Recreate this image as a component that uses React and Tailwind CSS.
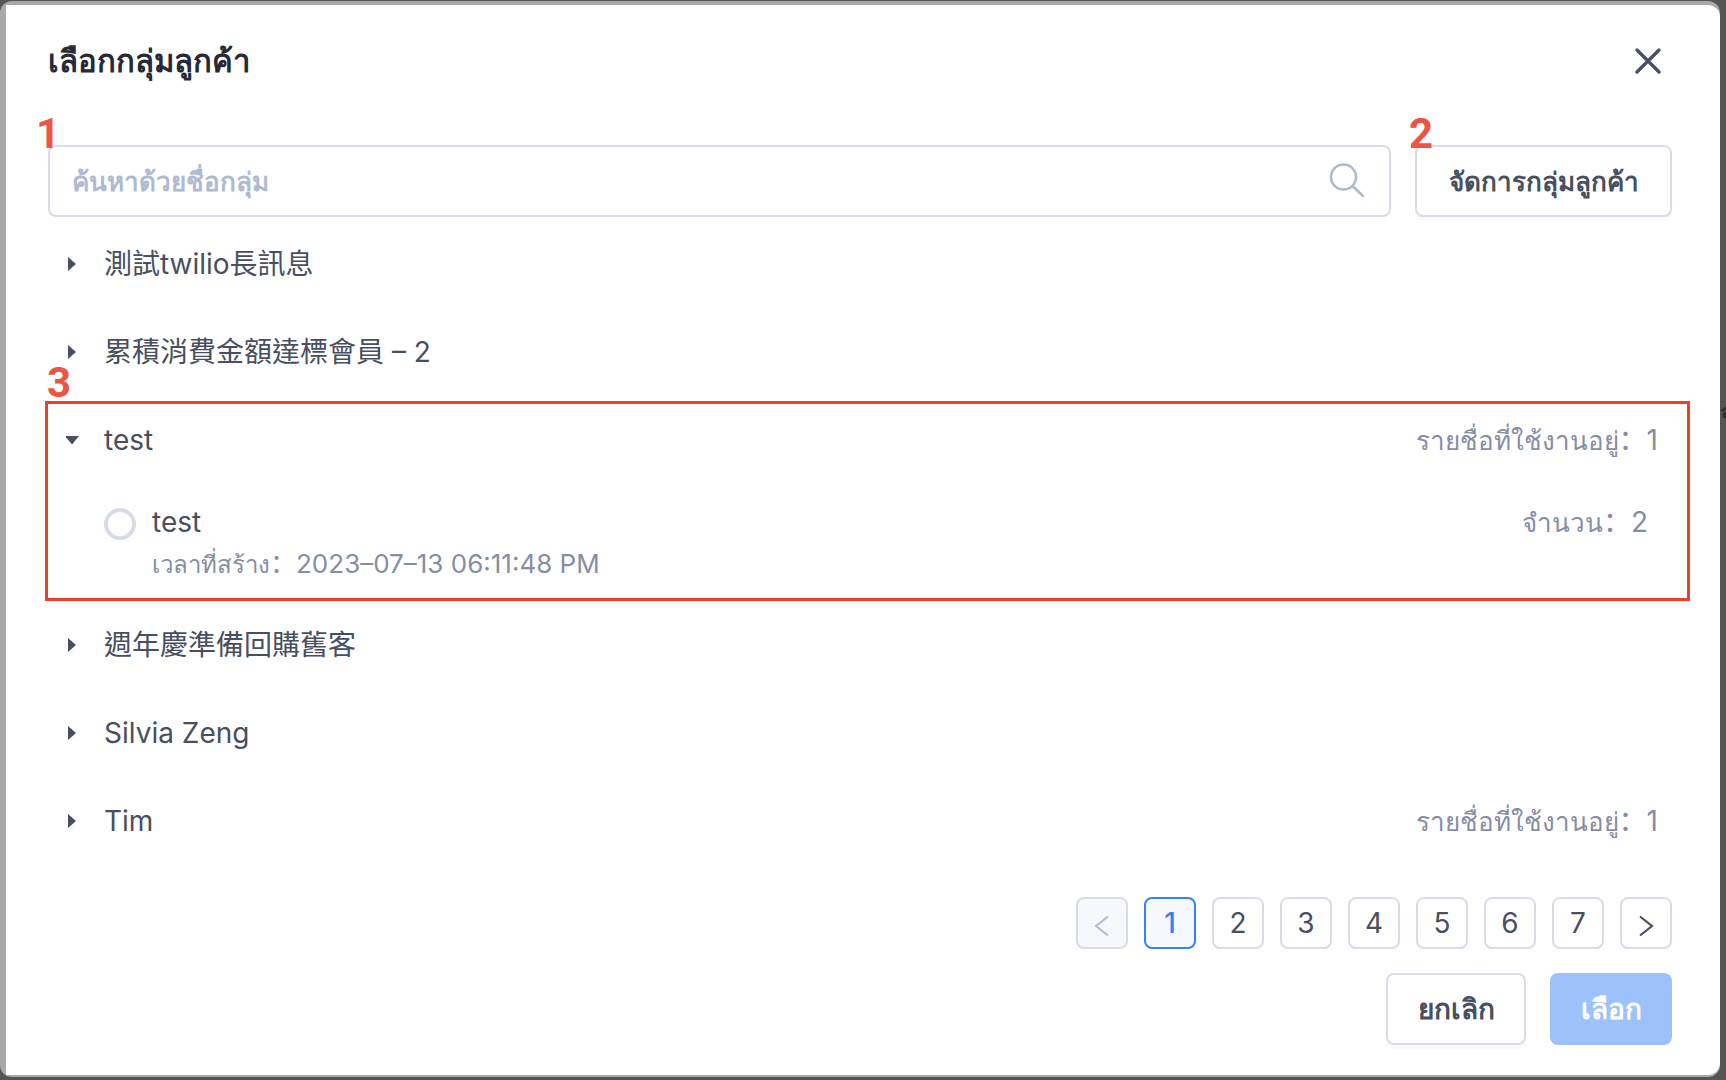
import { useState } from 'react';

const groups = [
  { id: 1, name: '測試twilio長訊息' },
  { id: 2, name: '累積消費金額達標會員 – 2' },
  {
    id: 3,
    name: 'test',
    active: 1,
    marker: '3',
    lists: [{ id: 31, name: 'test', count: 2, createdAt: '2023–07–13 06:11:48 PM' }],
  },
  { id: 4, name: '週年慶準備回購舊客' },
  { id: 5, name: 'Silvia Zeng' },
  { id: 6, name: 'Tim', active: 1 },
];

const pages = [1, 2, 3, 4, 5, 6, 7];

function Marker({ children, className }) {
  return (
    <span
      className={`absolute font-[Roboto,sans-serif] text-[42px] leading-none font-bold text-[#ec5545] pointer-events-none ${className}`}
    >
      {children}
    </span>
  );
}

// The wide colon comes from the Simplified Chinese face
function Label({ text, value, small }) {
  return (
    <span className="text-[#868da5] whitespace-nowrap">
      <span className={small ? 'text-[24px] font-medium' : 'text-[26px] font-medium'}>{text}</span>
      <span lang="zh-CN" className="font-['Noto_Sans_CJK_SC',sans-serif] leading-none">：</span>
      {value}
    </span>
  );
}

function Group({ group, open, onToggle, selected, onSelect }) {
  return (
    <li className="relative">
      <button
        onClick={onToggle}
        aria-expanded={open}
        className="w-full h-22 pl-[18px] pr-3.5 flex items-center text-left"
      >
        <svg viewBox="0 0 14 14" className="w-3.5 h-3.5 mr-6 shrink-0 fill-[#484f60]">
          {open ? <path d="M-1 3h14L6 11.500z" /> : <path d="M2 0v14l8-7z" />}
        </svg>
        <span className="flex-1">{group.name}</span>
        {group.active && <Label text="รายชื่อที่ใช้งานอยู่" value={group.active} />}
      </button>

      {open && group.lists && (
        <div className="h-[117px]">
          {group.lists.map((list) => (
            <div key={list.id} className="pl-14 pr-6 pt-4 flex items-start">
              <input
                type="radio"
                id={`list-${list.id}`}
                name="list"
                checked={selected === list.id}
                onChange={() => onSelect(list.id)}
                className="appearance-none w-8 h-8 mt-2 mr-4 shrink-0 rounded-full border-4 border-[#d8dbe8] checked:border-[#2f80f5]"
              />
              <label htmlFor={`list-${list.id}`} className="flex-1">
                <span className="block h-11 leading-11">{list.name}</span>
                <span className="block h-10 leading-10 text-[26px]">
                  <Label text="เวลาที่สร้าง" value={list.createdAt} small />
                </span>
              </label>
              <span className="leading-11">
                <Label text="จำนวน" value={list.count} />
              </span>
            </div>
          ))}
        </div>
      )}

      {group.marker && (
        <>
          <div className="absolute top-[5px] bottom-0 -left-[3px] -right-[18px] border-3 border-[#ea412c] pointer-events-none" />
          <Marker className="-top-[34px] -left-px">{group.marker}</Marker>
        </>
      )}
    </li>
  );
}

function App() {
  const [query, setQuery] = useState('');
  const [openId, setOpenId] = useState(3);
  const [selected, setSelected] = useState(null);
  const [page, setPage] = useState(1);

  const visible = groups.filter((g) => g.name.includes(query));

  return (
    <div className="relative min-h-screen bg-[#555555] pt-px pr-1.5 pb-[3px] flex font-[Inter,'Noto_Sans_CJK_TC',sans-serif] text-[28px] text-[#484f60]">
      {/* Page text cut off behind the dialog */}
      <span aria-hidden="true" className="absolute right-0 top-[392px] w-1.5 overflow-hidden text-[#2b2e36] font-semibold">จ</span>

      <div className="flex-1 flex rounded-xl bg-[#a9a9a9] pt-1 pl-1.5 pb-0.5">
        <div role="dialog" aria-labelledby="title" className="flex-1 flex flex-col rounded-r-xl bg-white pl-[42px] pr-12 pb-[30px]">
          <div className="h-[112px] flex items-center justify-between">
            <h1 id="title" className="text-[31px] font-semibold text-[#262a37]">เลือกกลุ่มลูกค้า</h1>
            <button aria-label="Close" className="w-12 h-12 flex items-center justify-center">
              <svg viewBox="0 0 28 28" className="w-7 h-7 stroke-[#484f60]" strokeWidth="3.4" strokeLinecap="round">
                <path d="M3 3l22 22M25 3L3 25" />
              </svg>
            </button>
          </div>

          {/* Search and manage */}
          <div className="mt-7 flex gap-6">
            <div className="relative flex-1">
              <input
                type="text"
                aria-label="ค้นหาด้วยชื่อกลุ่ม"
                placeholder="ค้นหาด้วยชื่อกลุ่ม"
                value={query}
                onChange={(e) => setQuery(e.target.value)}
                className="block w-full h-18 pl-[22px] pr-20 rounded-lg border-2 border-[#d8dbe8] text-[26px] font-semibold placeholder:text-[#aebad2] outline-none"
              />
              <svg
                viewBox="0 0 36 36"
                className="absolute right-[26px] top-[17px] w-9 h-9 fill-none stroke-[#aebad2]"
                strokeWidth="2.6"
                strokeLinecap="round"
              >
                <circle cx="14.500" cy="15" r="12.500" />
                <path d="M23.500 24L34 34" />
              </svg>
              <Marker className="-top-8 -left-3">1</Marker>
            </div>
            <div className="relative">
              <button className="h-18 w-[257px] rounded-lg border-2 border-[#d8dbe8] shadow-[0_4px_0_#fafafb] text-[26px] font-semibold whitespace-nowrap">
                จัดการกลุ่มลูกค้า
              </button>
              <Marker className="-top-8 -left-1.5">2</Marker>
            </div>
          </div>

          {/* Groups */}
          <ul className="mt-[3px] flex-1">
            {visible.map((group) => (
              <Group
                key={group.id}
                group={group}
                open={openId === group.id}
                onToggle={() => setOpenId(openId === group.id ? null : group.id)}
                selected={selected}
                onSelect={setSelected}
              />
            ))}
          </ul>

          {/* Pagination */}
          <nav className="flex justify-end gap-4">
            <button
              disabled={page === 1}
              aria-label="Previous page"
              onClick={() => setPage(page - 1)}
              className="w-13 h-13 flex items-center justify-center rounded-lg border-2 border-[#d8dbe8] disabled:bg-[#f7f8fc] disabled:text-[#aebad2]"
            >
              <svg viewBox="0 0 16 22" className="w-4 h-[22px] mt-1.5 fill-none stroke-current" strokeWidth="2">
                <path d="M14 1.500L2 11l12 9.500" />
              </svg>
            </button>
            {pages.map((p) => (
              <button
                key={p}
                onClick={() => setPage(p)}
                className={`w-13 h-13 rounded-lg border-2 ${
                  p === page ? 'border-[#3583f6] bg-[#f5f9ff] text-[#3583f6] font-medium' : 'border-[#d8dbe8]'
                }`}
              >
                {p}
              </button>
            ))}
            <button
              disabled={page === 7}
              aria-label="Next page"
              onClick={() => setPage(page + 1)}
              className="w-13 h-13 flex items-center justify-center rounded-lg border-2 border-[#d8dbe8]"
            >
              <svg viewBox="0 0 16 22" className="w-4 h-[22px] mt-1.5 fill-none stroke-current" strokeWidth="2.2">
                <path d="M2 1.500L14 11 2 20.500" />
              </svg>
            </button>
          </nav>

          {/* Actions */}
          <div className="mt-6 flex justify-end gap-6">
            <button className="w-[140px] h-18 rounded-lg border-2 border-[#d8dbe8] shadow-[0_4px_0_#fafafb] font-semibold">
              ยกเลิก
            </button>
            <button disabled={!selected} className="w-[122px] h-18 rounded-lg bg-[#3583f6] disabled:bg-[#9dc1fb] text-white font-semibold">
              เลือก
            </button>
          </div>
        </div>
      </div>
    </div>
  );
}

export default App;
